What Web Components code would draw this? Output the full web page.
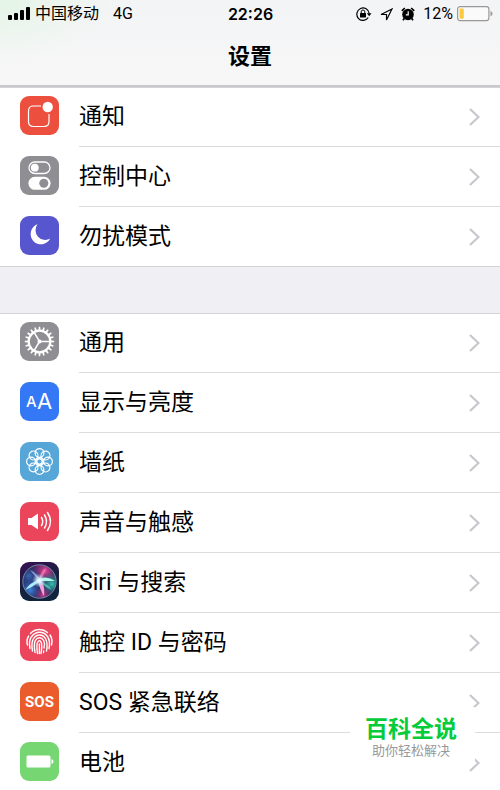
<!DOCTYPE html>
<html lang="zh-CN">
<head>
<meta charset="utf-8">
<meta name="viewport" content="width=device-width, initial-scale=1">
<title>设置</title>
<style>
  html {
    scrollbar-width: none;
  }
  body {
    margin: 0;
    background: #efeff4;
    color: #000;
    font-family: Roboto, "Noto Sans CJK SC", sans-serif;
  }
</style>
</head>
<body>
<settings-page>
  <status-bar slot="header" carrier="中国移动" network="4G" time="22:26" battery="12"></status-bar>
  <nav-title slot="header">设置</nav-title>

  <settings-group>
    <settings-row icon="notifications">通知</settings-row>
    <settings-row icon="control">控制中心</settings-row>
    <settings-row icon="moon">勿扰模式</settings-row>
  </settings-group>

  <settings-group>
    <settings-row icon="gear">通用</settings-row>
    <settings-row icon="display">显示与亮度</settings-row>
    <settings-row icon="wallpaper">墙纸</settings-row>
    <settings-row icon="sound">声音与触感</settings-row>
    <settings-row icon="siri">Siri 与搜索</settings-row>
    <settings-row icon="touch">触控 ID 与密码</settings-row>
    <settings-row icon="sos">SOS 紧急联络</settings-row>
    <settings-row icon="battery">电池</settings-row>
  </settings-group>

  <brand-mark slot="overlay">百科全说<span slot="tagline">助你轻松解决</span></brand-mark>
</settings-page>

<script>
// repeat a piece of svg around the middle of a 39px tile
function around(count, shape) {
  let out = "";
  for (let i = 0; i < count; i++) {
    out += `<g transform="rotate(${i * 360 / count} 19.5 19.5)">${shape}</g>`;
  }
  return out;
}

const ICONS = {
  notifications: {
    color: "#ec4f3e",
    svg: `
      <path d="M21 10H13.5Q8.5 10 8.5 15V25.5Q8.5 30.5 13.5 30.5H24Q29 30.5 29 25.5V18" fill="none" stroke="#fff" stroke-width="1.2"/>
      <circle cx="27.7" cy="11" r="5.2" fill="#fff"/>`
  },
  control: {
    color: "#8e8e93",
    svg: `
      <rect x="9" y="6" width="21" height="11.5" rx="5.7" fill="none" stroke="#fff" stroke-width="1.3"/>
      <circle cx="14.8" cy="11.7" r="3.9" fill="#fff"/>
      <rect x="8.4" y="20.8" width="22.2" height="13" rx="6.5" fill="#fff"/>
      <circle cx="23.8" cy="27.3" r="4.5" fill="#8e8e93"/>`
  },
  moon: {
    color: "#5856ce",
    svg: `<path d="M17.5 8.3A10.3 10.3 0 1 0 30.2 22.5A9.7 9.7 0 0 1 17.5 8.3Z" fill="#fff"/>`
  },
  gear: {
    color: "#8e8e93",
    svg: `
      <circle cx="19.5" cy="19.5" r="10.8" fill="none" stroke="#fff" stroke-width="2.2"/>
      ${around(20, `<path d="M18.4 9L18.8 4.8H20.2L20.6 9Z" fill="#fff"/>`)}
      <circle cx="19.5" cy="19.5" r="2" fill="#fff"/>
      <path d="M19.5 19.5H30M19.5 19.5L14 10.2M19.5 19.5L14 28.8" stroke="#fff" stroke-width="1.5"/>`
  },
  display: {
    color: "#3478f6",
    svg: `
      <g font-family="Inter, sans-serif" fill="#fff">
        <text x="6" y="25" font-size="15" font-weight="500">A</text>
        <text x="17" y="27" font-size="22">A</text>
      </g>`
  },
  wallpaper: {
    color: "#57a6d8",
    svg: `<g fill="none" stroke="#fff" stroke-width="1.2">
      ${around(8, `<circle cx="19.5" cy="11" r="4.4"/>`)}
      ${around(8, `<path d="M19.5 17L17.3 14.8M19.5 17L21.7 14.8"/>`)}
      <circle cx="19.5" cy="19.5" r="2.6" stroke-width="1"/>
    </g>`
  },
  sound: {
    color: "#eb455c",
    svg: `
      <path d="M8 16H11.5L18 11.5V27.5L11.5 23H8Z" fill="#fff"/>
      <path d="M21.5 15.5Q24 19.5 21.5 23.5M24.5 13Q28.5 19.5 24.5 26M27.5 10.5Q33.5 19.5 27.5 28.5" fill="none" stroke="#fff" stroke-width="1.5" stroke-linecap="round"/>`
  },
  siri: {
    color: "linear-gradient(160deg, #3a0f55, #17203f 45%, #10243d)",
    svg: `
      <defs>
        <radialGradient id="core">
          <stop offset="0" stop-color="#fff"/>
          <stop offset=".3" stop-color="#d9f4ff" stop-opacity=".9"/>
          <stop offset="1" stop-color="#9fdcff" stop-opacity="0"/>
        </radialGradient>
        <radialGradient id="pink">
          <stop offset="0" stop-color="#e8479a"/>
          <stop offset="1" stop-color="#a02e80" stop-opacity="0"/>
        </radialGradient>
        <radialGradient id="teal">
          <stop offset="0" stop-color="#35c3b0"/>
          <stop offset="1" stop-color="#1a7f83" stop-opacity="0"/>
        </radialGradient>
        <radialGradient id="blue">
          <stop offset="0" stop-color="#3e87dd"/>
          <stop offset="1" stop-color="#264a99" stop-opacity="0"/>
        </radialGradient>
        <clipPath id="orb"><circle cx="19.5" cy="19.5" r="16.5"/></clipPath>
      </defs>
      <g clip-path="url(#orb)">
        <rect width="39" height="39" fill="#2b2456"/>
        <circle cx="25" cy="9" r="14" fill="url(#pink)"/>
        <circle cx="9" cy="14" r="11" fill="url(#blue)" opacity=".7"/>
        <circle cx="32" cy="22" r="12" fill="url(#teal)"/>
        <circle cx="10" cy="28" r="13" fill="url(#blue)"/>
        <circle cx="23" cy="33" r="9" fill="url(#pink)" opacity=".8"/>
        <path d="M20 20L10 8Q18 11 20 20Z" fill="#8fb9ee" opacity=".8"/>
        <path d="M19 19Q20 9 26 6Q25 13 19 19Z" fill="#ff91b9" opacity=".6"/>
        <path d="M19 17Q27 13 35 19Q27 19 19 19Z" fill="#a9fae5"/>
        <path d="M18 18Q11 20 5 28Q13 25 19 20Z" fill="#a9edff"/>
        <path d="M18 19Q20 28 24 34Q25 25 22 19Z" fill="#f4a0d8"/>
        <path d="M20 19Q28 22 32 28Q24 25 20 19Z" fill="#5fdcc0" opacity=".7"/>
      </g>
      <circle cx="19" cy="18.5" r="7" fill="url(#core)"/>
      <circle cx="19.5" cy="19.5" r="16.7" fill="none" stroke="#8aa3bf" stroke-width="1" opacity=".8"/>`
  },
  touch: {
    color: "#eb455c",
    svg: `<g fill="none" stroke="#fff" stroke-width="1.4" stroke-linecap="round">
      <path d="M10.5 11.5Q14 7.5 19.5 7.5Q24 7.5 27.5 10.5"/>
      <path d="M7.5 23Q6 18 8.7 14M30 13Q33 17.5 31.5 23"/>
      <path d="M10 26.5Q8.5 19 11.5 14.7Q15 10.3 19.5 10.3Q24.5 10.3 27.5 14.5Q30.5 19 29 26.5"/>
      <path d="M12.5 29Q11 21 13.3 17Q15.7 13 19.5 13Q23.5 13 25.7 17Q28 21.5 26.5 29"/>
      <path d="M15 30.5Q13.5 22 15.3 18.5Q17 15.7 19.5 15.7Q22 15.7 23.7 18.5Q25.3 22 24 26M23.7 29L23.5 30.5"/>
      <path d="M17.5 31.5Q16.3 23 17.5 20.5Q19.5 17 21.3 20.5Q22.3 24 21 31.5"/>
      <path d="M19.4 22V31.5"/>
    </g>`
  },
  sos: {
    color: "#eb5c2c",
    svg: `<text x="19.5" y="25" font-size="15" font-weight="700" font-family="Roboto, sans-serif" text-anchor="middle" fill="#fff">SOS</text>`
  },
  battery: {
    color: "#76d672",
    svg: `
      <rect x="6.5" y="13.5" width="24" height="12" rx="1.5" fill="#fff"/>
      <path d="M31.5 17Q33.5 17.5 33.5 19.5Q33.5 21.5 31.5 22Z" fill="#fff"/>`
  }
};

class SettingsPage extends HTMLElement {
  constructor() {
    super();
    this.attachShadow({ mode: "open" }).innerHTML = `
      <style>
        :host {
          display: block;
        }
        header {
          min-height: 85px;
          border-bottom: 2px solid #c8c8cd;
          background:
            radial-gradient(ellipse 110px 60px at 0 0, #e4f5e6, transparent),
            linear-gradient(#f3f4f5, #f7f7f8);
        }
        main {
          display: flex;
          flex-direction: column;
          gap: 46px;
        }
      </style>
      <header><slot name="header"></slot></header>
      <main><slot></slot></main>
      <slot name="overlay"></slot>
    `;
  }
}

class StatusBar extends HTMLElement {
  connectedCallback() {
    const level = +this.getAttribute("battery");
    const root = this.shadowRoot || this.attachShadow({ mode: "open" });
    root.innerHTML = `
      <style>
        :host {
          display: grid;
          grid-template-columns: 1fr auto 1fr;
          align-items: center;
          height: 28px;
          padding: 0 7px 0 8px;
          font-size: 16px;
          line-height: 24px;
        }
        div {
          display: flex;
          align-items: center;
        }
        .left {
          gap: 5px;
        }
        .network {
          margin-left: 9px;
        }
        .time {
          font-family: Inter, sans-serif;
          font-weight: 600;
        }
        .right {
          justify-content: flex-end;
          gap: 8px;
        }
        .power {
          gap: 4px;
        }
        svg {
          display: block;
          flex: none;
        }
      </style>
      <div class="left">
        <svg width="22" height="14" viewBox="0 0 22 14">
          <rect y="8" width="4" height="5" rx="1"/>
          <rect x="6" y="6" width="4" height="7" rx="1"/>
          <rect x="12" y="3" width="4" height="10" rx="1"/>
          <rect x="18" width="4" height="13" rx="1"/>
        </svg>
        <span>${this.getAttribute("carrier")}</span>
        <span class="network">${this.getAttribute("network")}</span>
      </div>
      <span class="time">${this.getAttribute("time")}</span>
      <div class="right">
        <svg width="16" height="14" viewBox="0 0 16 14">
          <path d="M12.3 10.5A6.2 6.2 0 1 1 13.2 6.5" fill="none" stroke="#000" stroke-width="1.2"/>
          <path d="M10.8 6.3H15.5L13.2 9.3Z"/>
          <rect x="4" y="6" width="6" height="4.5" rx=".5"/>
          <path d="M5.2 6V4.8a1.8 1.8 0 0 1 3.6 0V6" fill="none" stroke="#000"/>
        </svg>
        <svg width="13" height="13" viewBox="0 0 13 13">
          <path d="M12 1L1 6.5H6.5V12Z" fill="none" stroke="#000" stroke-width="1.2"/>
        </svg>
        <svg width="14" height="14" viewBox="0 0 14 14">
          <circle cx="7" cy="7.5" r="5.8"/>
          <path d="M.8 3.8L3.8 1M10.2 1L13.2 3.8M3.2 11.5L2 13.3M10.8 11.5L12 13.3" stroke="#000" stroke-width="1.7"/>
          <path d="M7.2 4.2V7.8H4.8" fill="none" stroke="#fff" stroke-width="1.2"/>
        </svg>
        <div class="power">
          <span>${level}%</span>
          <svg width="36" height="16" viewBox="0 0 36 16">
            <rect x=".6" y=".6" width="31.3" height="14" rx="2.5" fill="#fafafa" stroke="#999" stroke-width="1.2"/>
            <rect x="2.5" y="2.5" width="${27.5 * level / 100 + 1}" height="10.2" rx="1" fill="#fbcb3f"/>
            <path d="M33.5 5Q35.5 5.5 35.5 7.6Q35.5 9.7 33.5 10.2Z" fill="#999"/>
          </svg>
        </div>
      </div>
    `;
  }
}

class NavTitle extends HTMLElement {
  constructor() {
    super();
    this.attachShadow({ mode: "open" }).innerHTML = `
      <style>
        :host {
          display: block;
          padding: 13px 0 12px;
        }
        h1 {
          margin: 0;
          font-size: 22px;
          font-weight: 700;
          line-height: 32px;
          text-align: center;
        }
      </style>
      <h1><slot></slot></h1>
    `;
  }
}

class SettingsGroup extends HTMLElement {
  constructor() {
    super();
    this.attachShadow({ mode: "open" }).innerHTML = `
      <style>
        :host {
          display: block;
          background: #fff;
          box-shadow: inset 0 1px #d2d2d7, inset 0 -1px #d2d2d7;
        }
        ::slotted(:last-child) {
          --separator: transparent;
        }
      </style>
      <slot></slot>
    `;
  }
}

class SettingsIcon extends HTMLElement {
  connectedCallback() {
    const icon = ICONS[this.getAttribute("name")];
    const root = this.shadowRoot || this.attachShadow({ mode: "open" });
    root.innerHTML = `
      <style>
        :host {
          display: block;
          flex: none;
          width: 39px;
          height: 39px;
          border-radius: 9px;
          overflow: hidden;
          background: ${icon.color};
        }
        svg {
          display: block;
        }
      </style>
      <svg width="39" height="39" viewBox="0 0 39 39">${icon.svg}</svg>
    `;
  }
}

class SettingsRow extends HTMLElement {
  constructor() {
    super();
    this.attachShadow({ mode: "open" }).innerHTML = `
      <style>
        :host {
          display: block;
        }
        a {
          display: flex;
          gap: 20px;
          padding-left: 20px;
          color: inherit;
          text-decoration: none;
        }
        settings-icon {
          margin-top: 9px;
        }
        .body {
          flex: 1;
          display: flex;
          align-items: center;
          justify-content: space-between;
          min-height: 58px;
          padding: 1px 20px 0 0;
          border-bottom: 1px solid var(--separator, #dcdcde);
          font-size: 23px;
          line-height: 34px;
        }
      </style>
      <a href="#${this.getAttribute("icon")}">
        <settings-icon name="${this.getAttribute("icon")}"></settings-icon>
        <span class="body">
          <span><slot></slot></span>
          <svg width="11" height="18" viewBox="0 0 11 18">
            <path d="M1 1L9.5 9L1 17" fill="none" stroke="#c7c7cc" stroke-width="2.2"/>
          </svg>
        </span>
      </a>
    `;
  }
}

class BrandMark extends HTMLElement {
  constructor() {
    super();
    this.attachShadow({ mode: "open" }).innerHTML = `
      <style>
        :host {
          position: fixed;
          right: 25px;
          bottom: 25px;
          box-sizing: border-box;
          width: 125px;
          padding: 10px 3px 6px 0;
          background: #fff;
          text-align: center;
        }
        div {
          color: #06cb3a;
          font-size: 23px;
          font-weight: 700;
          line-height: 26px;
        }
        small {
          display: block;
          color: #999;
          font-size: 13px;
          line-height: 16px;
        }
      </style>
      <div><slot></slot></div>
      <small><slot name="tagline"></slot></small>
    `;
  }
}

window.customElements.define("settings-page", SettingsPage);
window.customElements.define("status-bar", StatusBar);
window.customElements.define("nav-title", NavTitle);
window.customElements.define("settings-group", SettingsGroup);
window.customElements.define("settings-icon", SettingsIcon);
window.customElements.define("settings-row", SettingsRow);
window.customElements.define("brand-mark", BrandMark);
</script>
</body>
</html>
